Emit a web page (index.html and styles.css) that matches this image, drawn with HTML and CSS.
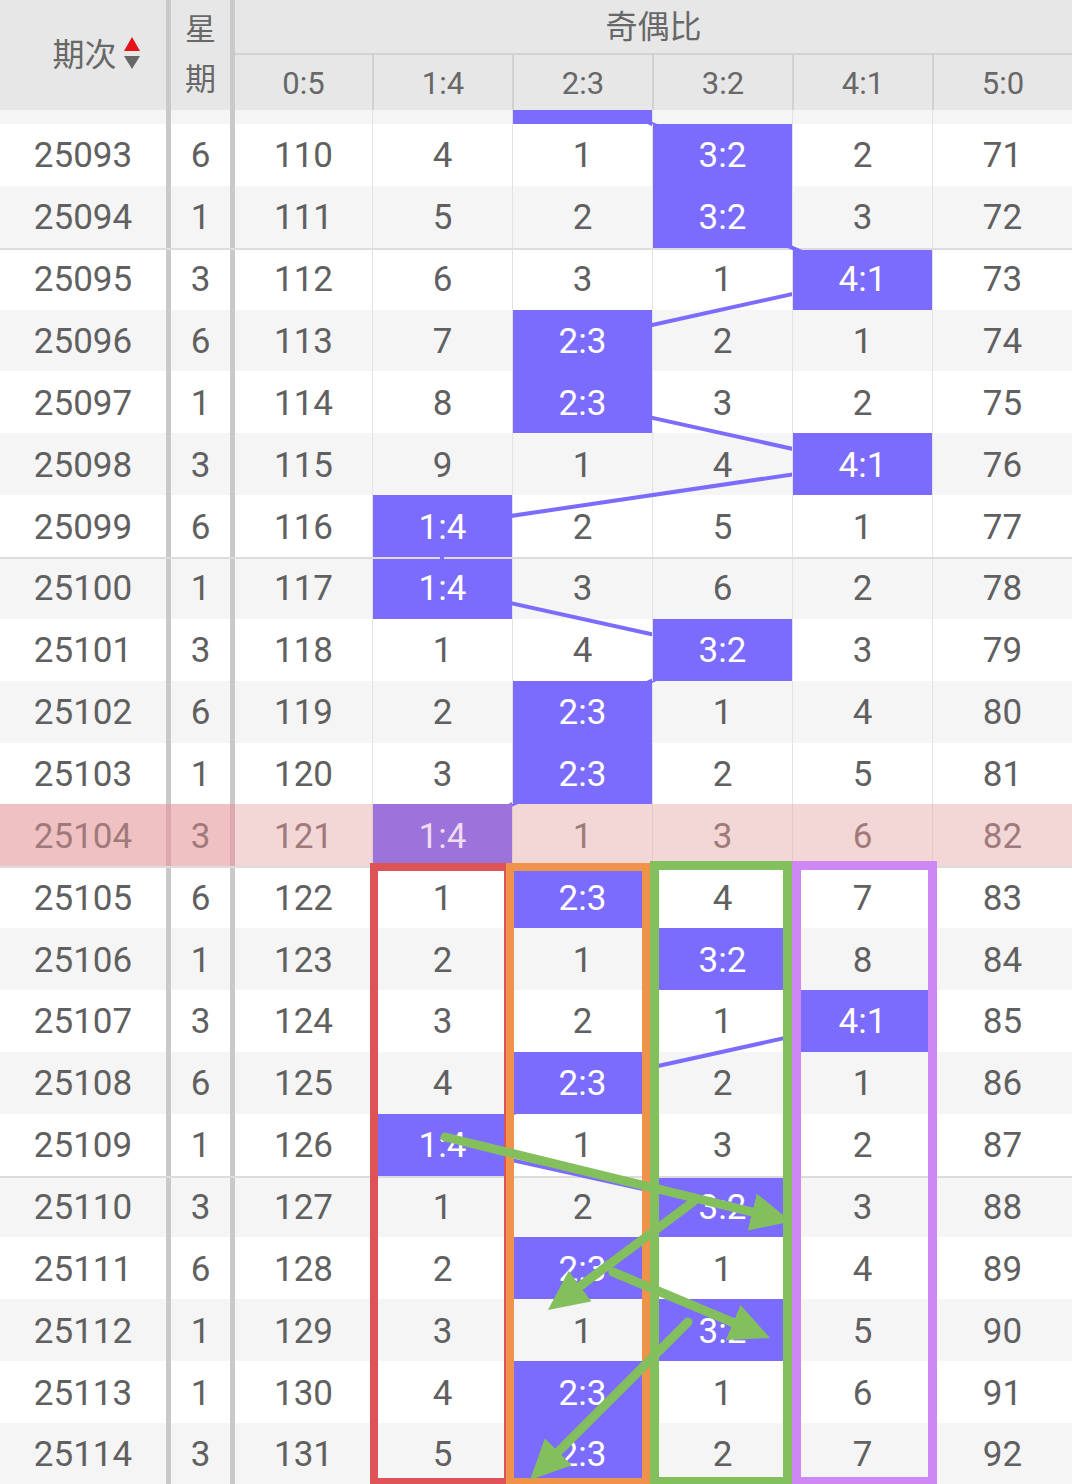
FILE: index.html
```html
<!DOCTYPE html>
<html lang="zh">
<head>
<meta charset="utf-8">
<title>奇偶比走势</title>
<link rel="stylesheet" href="styles.css">
</head>
<body>
<div class="sheet">
  <div class="head">
    <div class="h-qi"><span>期次</span><svg class="sort" width="16" height="34" viewBox="0 0 16 34"><polygon points="0,14 8,0 16,14" fill="#e5121a"/><polygon points="0,19 16,19 8,32" fill="#676767"/></svg></div>
    <div class="h-xq"><span>星</span><span>期</span></div>
    <div class="h-group">
      <div class="h-title">奇偶比</div>
      <div class="h-sub">
        <div class="hc first">0:5</div><div class="hc">1:4</div><div class="hc">2:3</div><div class="hc">3:2</div><div class="hc">4:1</div><div class="hc">5:0</div>
      </div>
    </div>
  </div>

  <div class="tbody">
    <div class="row partial"><div class="c qi"></div><div class="c xq"></div><div class="c r0"></div><div class="c r"></div><div class="c r hit"></div><div class="c r"></div><div class="c r"></div><div class="c r"></div></div>

    <div class="row"><div class="c qi">25093</div><div class="c xq">6</div><div class="c r0">110</div><div class="c r">4</div><div class="c r">1</div><div class="c r hit">3:2</div><div class="c r">2</div><div class="c r">71</div></div>
    <div class="row g"><div class="c qi">25094</div><div class="c xq">1</div><div class="c r0">111</div><div class="c r">5</div><div class="c r">2</div><div class="c r hit">3:2</div><div class="c r">3</div><div class="c r">72</div></div>
    <div class="row sep"><div class="c qi">25095</div><div class="c xq">3</div><div class="c r0">112</div><div class="c r">6</div><div class="c r">3</div><div class="c r">1</div><div class="c r hit">4:1</div><div class="c r">73</div></div>
    <div class="row g"><div class="c qi">25096</div><div class="c xq">6</div><div class="c r0">113</div><div class="c r">7</div><div class="c r hit">2:3</div><div class="c r">2</div><div class="c r">1</div><div class="c r">74</div></div>
    <div class="row"><div class="c qi">25097</div><div class="c xq">1</div><div class="c r0">114</div><div class="c r">8</div><div class="c r hit">2:3</div><div class="c r">3</div><div class="c r">2</div><div class="c r">75</div></div>
    <div class="row g"><div class="c qi">25098</div><div class="c xq">3</div><div class="c r0">115</div><div class="c r">9</div><div class="c r">1</div><div class="c r">4</div><div class="c r hit">4:1</div><div class="c r">76</div></div>
    <div class="row"><div class="c qi">25099</div><div class="c xq">6</div><div class="c r0">116</div><div class="c r hit">1:4</div><div class="c r">2</div><div class="c r">5</div><div class="c r">1</div><div class="c r">77</div></div>
    <div class="row g sep"><div class="c qi">25100</div><div class="c xq">1</div><div class="c r0">117</div><div class="c r hit">1:4</div><div class="c r">3</div><div class="c r">6</div><div class="c r">2</div><div class="c r">78</div></div>
    <div class="row"><div class="c qi">25101</div><div class="c xq">3</div><div class="c r0">118</div><div class="c r">1</div><div class="c r">4</div><div class="c r hit">3:2</div><div class="c r">3</div><div class="c r">79</div></div>
    <div class="row g"><div class="c qi">25102</div><div class="c xq">6</div><div class="c r0">119</div><div class="c r">2</div><div class="c r hit">2:3</div><div class="c r">1</div><div class="c r">4</div><div class="c r">80</div></div>
    <div class="row"><div class="c qi">25103</div><div class="c xq">1</div><div class="c r0">120</div><div class="c r">3</div><div class="c r hit">2:3</div><div class="c r">2</div><div class="c r">5</div><div class="c r">81</div></div>
    <div class="row hl"><div class="c qi">25104</div><div class="c xq">3</div><div class="c r0">121</div><div class="c r hit">1:4</div><div class="c r">1</div><div class="c r">3</div><div class="c r">6</div><div class="c r">82</div></div>
    <div class="row sep"><div class="c qi">25105</div><div class="c xq">6</div><div class="c r0">122</div><div class="c r">1</div><div class="c r hit">2:3</div><div class="c r">4</div><div class="c r">7</div><div class="c r">83</div></div>
    <div class="row g"><div class="c qi">25106</div><div class="c xq">1</div><div class="c r0">123</div><div class="c r">2</div><div class="c r">1</div><div class="c r hit">3:2</div><div class="c r">8</div><div class="c r">84</div></div>
    <div class="row"><div class="c qi">25107</div><div class="c xq">3</div><div class="c r0">124</div><div class="c r">3</div><div class="c r">2</div><div class="c r">1</div><div class="c r hit">4:1</div><div class="c r">85</div></div>
    <div class="row g"><div class="c qi">25108</div><div class="c xq">6</div><div class="c r0">125</div><div class="c r">4</div><div class="c r hit">2:3</div><div class="c r">2</div><div class="c r">1</div><div class="c r">86</div></div>
    <div class="row"><div class="c qi">25109</div><div class="c xq">1</div><div class="c r0">126</div><div class="c r hit">1:4</div><div class="c r">1</div><div class="c r">3</div><div class="c r">2</div><div class="c r">87</div></div>
    <div class="row g sep"><div class="c qi">25110</div><div class="c xq">3</div><div class="c r0">127</div><div class="c r">1</div><div class="c r">2</div><div class="c r hit">3:2</div><div class="c r">3</div><div class="c r">88</div></div>
    <div class="row"><div class="c qi">25111</div><div class="c xq">6</div><div class="c r0">128</div><div class="c r">2</div><div class="c r hit">2:3</div><div class="c r">1</div><div class="c r">4</div><div class="c r">89</div></div>
    <div class="row g"><div class="c qi">25112</div><div class="c xq">1</div><div class="c r0">129</div><div class="c r">3</div><div class="c r">1</div><div class="c r hit">3:2</div><div class="c r">5</div><div class="c r">90</div></div>
    <div class="row"><div class="c qi">25113</div><div class="c xq">1</div><div class="c r0">130</div><div class="c r">4</div><div class="c r hit">2:3</div><div class="c r">1</div><div class="c r">6</div><div class="c r">91</div></div>
    <div class="row g"><div class="c qi">25114</div><div class="c xq">3</div><div class="c r0">131</div><div class="c r">5</div><div class="c r hit">2:3</div><div class="c r">2</div><div class="c r">7</div><div class="c r">92</div></div>
  </div>

  <svg class="links" width="1072" height="1484" viewBox="0 0 1072 1484">
    <polyline fill="none" stroke="#7b6cfe" stroke-width="4" stroke-linejoin="round"
      points="582,93 722,154.9 722,216.8 862,278.6 582,340.5 582,402.4 862,464.2 442,526.1 442,588 722,649.8 582,711.7 582,773.5 442,835.4 582,897.2 722,959.1 862,1021 582,1082.8 442,1144.7 722,1206.6 582,1268.4 722,1330.3 582,1392.1 582,1454"/>
  </svg>

  <svg class="marks" width="1072" height="1484" viewBox="0 0 1072 1484">
    <defs>
      <marker id="ah" markerUnits="userSpaceOnUse" markerWidth="40" markerHeight="38" refX="18" refY="19" orient="auto">
        <path d="M0,0 L40,19 L0,38 z" fill="#84bf5e"/>
      </marker>
    </defs>
    <rect x="374" y="867" width="134" height="615" fill="none" stroke="#dd5358" stroke-width="8"/>
    <rect x="510" y="867" width="136" height="615" fill="none" stroke="#ef924a" stroke-width="8"/>
    <rect x="654.5" y="865.5" width="133" height="616" fill="none" stroke="#84bf5e" stroke-width="9"/>
    <rect x="796.5" y="865.5" width="136" height="616" fill="none" stroke="#cd88f5" stroke-width="9"/>
    <g stroke="#84bf5e" stroke-width="9" stroke-linecap="round" fill="none">
      <line x1="445" y1="1137" x2="769.7" y2="1216.3" marker-end="url(#ah)"/>
      <line x1="693" y1="1202" x2="565.6" y2="1296.9" marker-end="url(#ah)"/>
      <line x1="613" y1="1272" x2="749.7" y2="1329.5" marker-end="url(#ah)"/>
      <line x1="688" y1="1322" x2="545.6" y2="1464.4" marker-end="url(#ah)"/>
    </g>
  </svg>
</div>
</body>
</html>
```

FILE: styles.css
```css
* {
  box-sizing: border-box;
}

html,
body {
  margin: 0;
  padding: 0;
}

body {
  width: 1072px;
  height: 1484px;
  overflow: hidden;
  background: #ffffff;
  font-family: Roboto, "Noto Sans CJK SC", "Noto Sans", sans-serif;
  color: #606060;
}

.sheet {
  position: relative;
  width: 1072px;
  height: 1484px;
  overflow: hidden;
}

/* ---------- header ---------- */
.head {
  position: relative;
  z-index: 3;
  display: flex;
  height: 110px;
  background: #e7e7e7;
  color: #686868;
}

.h-qi {
  width: 171px;
  border-right: 5px solid #c9c9c9;
  display: flex;
  align-items: center;
  justify-content: center;
  padding-left: 26px;
  gap: 7px;
  font-size: 32px;
  line-height: 1;
}

.sort {
  display: block;
  margin-top: -2px;
}

.h-xq {
  width: 64px;
  border-right: 5px solid #c9c9c9;
  display: flex;
  flex-direction: column;
  align-items: center;
  justify-content: center;
  font-size: 31px;
  line-height: 50px;
}

.h-group {
  flex: 1;
  display: flex;
  flex-direction: column;
}

.h-title {
  height: 55px;
  border-bottom: 2px solid #d2d2d2;
  display: flex;
  align-items: center;
  justify-content: center;
  font-size: 32px;
  line-height: 1;
}

.h-sub {
  flex: 1;
  display: flex;
}

.hc {
  width: 140px;
  border-left: 2px solid #d2d2d2;
  display: flex;
  align-items: center;
  justify-content: center;
  padding-top: 2px;
  font-size: 31px;
  line-height: 1;
}

.hc.first {
  width: 137px;
  border-left: 0;
}

/* ---------- body ---------- */
.tbody {
  display: flex;
  flex-direction: column;
}

.row {
  display: flex;
  height: 61.86px;
  flex: none;
  background: #ffffff;
}

.row.g {
  background: #f5f5f5;
}

.row.sep {
  border-top: 2px solid #dcdcdc;
}

.row.partial {
  height: 14px;
  background: #f5f5f5;
}

.c {
  display: flex;
  align-items: center;
  justify-content: center;
  padding-top: 2px;
  font-size: 35px;
  line-height: 1;
}

.row.sep .c {
  padding-top: 0;
}

.qi {
  width: 171px;
  border-right: 5px solid #c9c9c9;
}

.xq {
  width: 64px;
  border-right: 5px solid #c9c9c9;
}

.r0 {
  width: 137px;
}

.r {
  width: 140px;
  border-left: 1px solid #e2e2e2;
}

.hit {
  position: relative;
  z-index: 2;
  background: #7b6cfe;
  color: #ffffff;
}

/* highlighted (current) row */
.row.hl {
  background: #f3d7d7;
  color: #a07a7a;
}

.row.hl .qi,
.row.hl .xq {
  background: #f0c1c3;
  border-right-color: #dcaaae;
}

.row.hl .r {
  border-left-color: #e6caca;
}

.row.hl .hit {
  background: #9b73da;
  color: #f0dcf2;
}

/* ---------- overlays ---------- */
.links {
  position: absolute;
  top: 0;
  left: 0;
  z-index: 1;
  pointer-events: none;
}

.marks {
  position: absolute;
  top: 0;
  left: 0;
  z-index: 5;
  pointer-events: none;
}
```
